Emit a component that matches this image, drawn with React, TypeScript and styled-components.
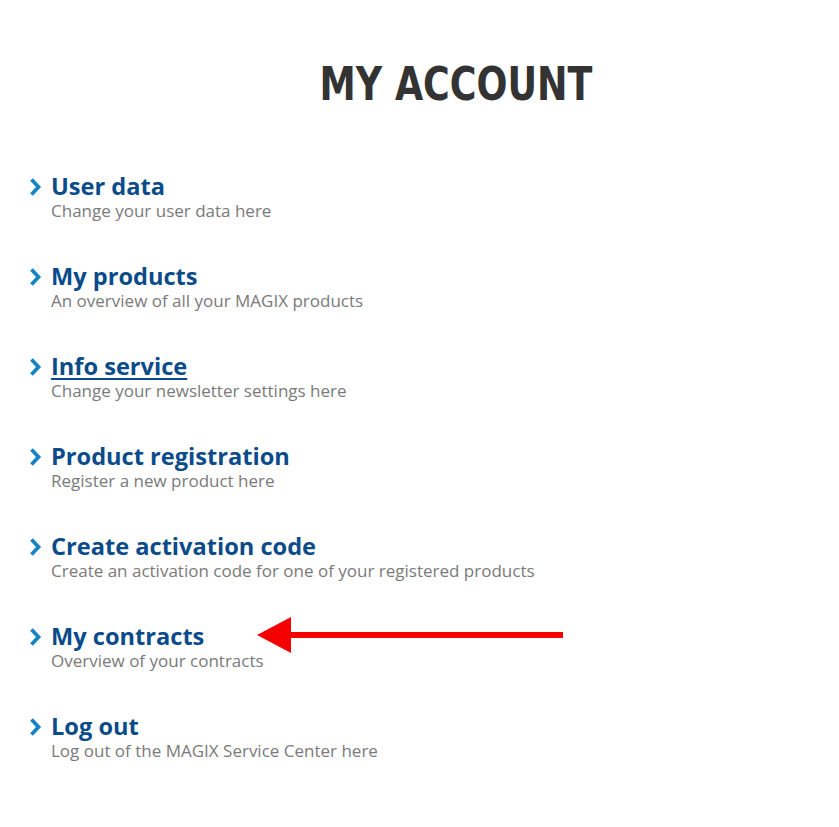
import React from 'react';
import styled, {createGlobalStyle} from 'styled-components';

const GlobalStyle = createGlobalStyle`
  body {
    margin: 0;
    background: white;
    font-family: "Open Sans", "Liberation Sans", sans-serif;
  }
`;

const Page = styled.div`
  position: relative;
  width: 839px;
  height: 827px;
  overflow: hidden;
`;

const Title = styled.h1`
  margin: 0;
  padding: 56px 0 0 73px;
  text-align: center;
  font-family: "DejaVu Sans Condensed", "DejaVu Sans", sans-serif;
  font-stretch: condensed;
  font-weight: bold;
  font-size: 46px;
  line-height: 56px;
  color: #333;
  transform: scaleX(0.88);
  transform-origin: 456px 0;
`;

const MenuList = styled.ul`
  list-style: none;
  margin: 0;
  padding: 60px 0 0 27px;
  display: flex;
  flex-direction: column;
  gap: 40px;
`;

const Item = styled.li`
  display: flex;
  align-items: flex-start;
  gap: 8px;
`;

const Chevron = styled.svg`
  flex: none;
  margin-top: 5px;
`;

const Texts = styled.div`
  display: flex;
  flex-direction: column;
`;

const Heading = styled.a<{$active?: boolean}>`
  font-size: 23.6px;
  line-height: 28px;
  font-weight: bold;
  color: #0b4b8a;
  text-decoration: ${p => (p.$active ? 'underline' : 'none')};
  text-underline-offset: 3px;
  text-decoration-thickness: 2px;
  align-self: flex-start;
`;

const Sub = styled.span`
  font-size: 17px;
  line-height: 22px;
  color: #7a7a7a;
`;

const Arrow = styled.svg`
  position: absolute;
  left: 255px;
  top: 616px;
`;

const items = [
  {title: 'User data', sub: 'Change your user data here'},
  {title: 'My products', sub: 'An overview of all your MAGIX products'},
  {title: 'Info service', sub: 'Change your newsletter settings here', active: true},
  {title: 'Product registration', sub: 'Register a new product here'},
  {title: 'Create activation code', sub: 'Create an activation code for one of your registered products'},
  {title: 'My contracts', sub: 'Overview of your contracts'},
  {title: 'Log out', sub: 'Log out of the MAGIX Service Center here'},
];

function App() {
  return (
    <Page>
      <GlobalStyle/>
      <Title>MY ACCOUNT</Title>
      <MenuList>
        {items.map(item =>
          <Item key={item.title}>
            <Chevron width="16" height="20" viewBox="0 0 16 20">
              <path d="M4.5 2.5 L11.5 10 L4.5 17.5" fill="none" stroke="#1684c2" strokeWidth="3.8"/>
            </Chevron>
            <Texts>
              <Heading href="#" $active={item.active}>{item.title}</Heading>
              <Sub>{item.sub}</Sub>
            </Texts>
          </Item>
        )}
      </MenuList>
      <Arrow width="312" height="40" viewBox="0 0 312 40">
        <line x1="30" y1="19" x2="308" y2="19" stroke="#f50000" strokeWidth="6"/>
        <polygon points="2,19 36,1 36,37" fill="#f50000"/>
      </Arrow>
    </Page>
  );
}

export default App;
